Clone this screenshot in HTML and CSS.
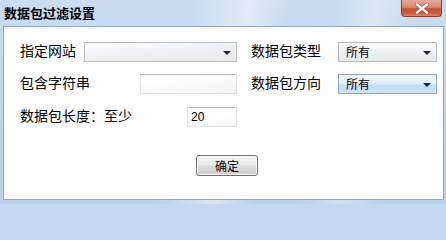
FILE: index.html
```html
<!DOCTYPE html>
<html lang="zh-CN">
<head>
<meta charset="utf-8">
<title>数据包过滤设置</title>
<link rel="stylesheet" href="styles.css">
</head>
<body>
<div class="window">
  <div class="titlebar">
    <span class="title">数据包过滤设置</span>
    <div class="close" aria-label="关闭">
      <svg width="14" height="11" viewBox="0 0 14 11">
        <path d="M2 1.5 L12 9.5 M12 1.5 L2 9.5" stroke="#6a2a20" stroke-width="4" stroke-linecap="square" fill="none" opacity="0.55"/>
        <path d="M2 1.5 L12 9.5 M12 1.5 L2 9.5" stroke="#ffffff" stroke-width="2.4" stroke-linecap="square" fill="none"/>
      </svg>
    </div>
  </div>
  <div class="panel">
    <div class="form">
      <div class="field">
        <span class="label">指定网站</span>
        <div class="combo site"><span class="value"></span><span class="arrow"></span></div>
      </div>
      <div class="field">
        <span class="label">数据包类型</span>
        <div class="combo type"><span class="value">所有</span><span class="arrow"></span></div>
      </div>
      <div class="field">
        <span class="label">包含字符串</span>
        <div class="textbox str"></div>
      </div>
      <div class="field">
        <span class="label">数据包方向</span>
        <div class="combo type active"><span class="value">所有</span><span class="arrow"></span></div>
      </div>
      <div class="field third">
        <span class="label">数据包长度：至少</span>
        <div class="textbox len">20</div>
      </div>
    </div>
    <div class="actions">
      <div class="btn">确定</div>
    </div>
  </div>
</div>
</body>
</html>
```
FILE: styles.css
```css
html, body {
  margin: 0;
  padding: 0;
  background: #c3d8ef;
}

.window {
  width: 446px;
  height: 204px;
  display: flex;
  flex-direction: column;
  background:
    linear-gradient(100deg, rgba(255,255,255,0) 40%, rgba(255,255,255,0.45) 52%, rgba(255,255,255,0) 60%, rgba(255,255,255,0) 70%, rgba(255,255,255,0.35) 78%, rgba(255,255,255,0) 86%),
    linear-gradient(to bottom, #c9dcf1, #b9d0ea);
  font-family: "Noto Sans CJK SC", "Noto Sans", sans-serif;
  color: #000;
}

.titlebar {
  height: 26px;
  flex: 0 0 26px;
  display: flex;
  justify-content: space-between;
  align-items: flex-start;
}

.title {
  font-size: 13px;
  font-weight: bold;
  line-height: 13px;
  padding: 6px 0 0 4px;
  color: #000;
}

.close {
  width: 41px;
  height: 17px;
  margin-right: 4px;
  box-sizing: border-box;
  border: 1px solid #8e3b2e;
  border-top: none;
  border-radius: 0 0 4px 4px;
  background: linear-gradient(to bottom, #e6a998 0%, #d98770 45%, #c45337 55%, #c9573c 80%, #dc8a6c 100%);
  display: flex;
  align-items: center;
  justify-content: center;
}

.close svg {
  display: block;
}

.panel {
  flex: 1 1 auto;
  margin: 0 2px 4px 3px;
  border: 1px solid #8fa4bd;
  background: #ffffff;
  display: flex;
  flex-direction: column;
}

.form {
  display: grid;
  grid-template-columns: 217px 186px;
  column-gap: 14px;
  row-gap: 12px;
  padding: 15px 0 0 16px;
}

.field {
  display: flex;
  justify-content: space-between;
  align-items: flex-start;
  height: 20px;
}

.field.third {
  margin-top: 1px;
}

.label {
  font-size: 14px;
  line-height: 16px;
  white-space: nowrap;
}

.combo {
  box-sizing: border-box;
  height: 20px;
  border: 1px solid #b8bec8;
  background: linear-gradient(to bottom, #f8f9fb 0%, #eef1f4 50%, #e4e8ec 100%);
  display: flex;
  align-items: center;
  justify-content: space-between;
  padding: 0 5px 0 7px;
  font-size: 12px;
  line-height: 18px;
}

.combo.site {
  width: 153px;
  background: linear-gradient(175deg, #ffffff 0%, #eef2f6 45%, #e6ebf0 100%);
}

.combo.type {
  width: 99px;
}

.combo.active {
  border-color: #8fa6c2;
  background: linear-gradient(to bottom, #f4f9fe 0%, #e2f0fb 45%, #bcdcf4 60%, #cfe6f8 100%);
}

.arrow {
  width: 0;
  height: 0;
  border-left: 4px solid transparent;
  border-right: 4px solid transparent;
  border-top: 4px solid #1a2740;
  margin-top: 1px;
}

.textbox {
  box-sizing: border-box;
  height: 20px;
  border: 1px solid #dde2e8;
  border-top-color: #b7bcc4;
  background: linear-gradient(175deg, #ffffff 30%, #eef1f5 100%);
  font-family: "Liberation Sans", Arial, sans-serif;
  font-size: 12px;
  line-height: 18px;
  padding-left: 3px;
}

.textbox.str {
  width: 97px;
}

.textbox.len {
  width: 50px;
  background: linear-gradient(175deg, #ffffff 50%, #f3f5f8 100%);
}

.actions {
  display: flex;
  padding: 28px 0 0 192px;
}

.btn {
  box-sizing: border-box;
  width: 62px;
  height: 21px;
  border: 1px solid #707070;
  border-radius: 3px;
  background: linear-gradient(to bottom, #f3f3f3 0%, #ebebeb 48%, #dcdcdc 52%, #cfcfcf 100%);
  box-shadow: inset 0 0 0 1px #fbfbfb;
  font-size: 12px;
  line-height: 19px;
  text-align: center;
}
```
